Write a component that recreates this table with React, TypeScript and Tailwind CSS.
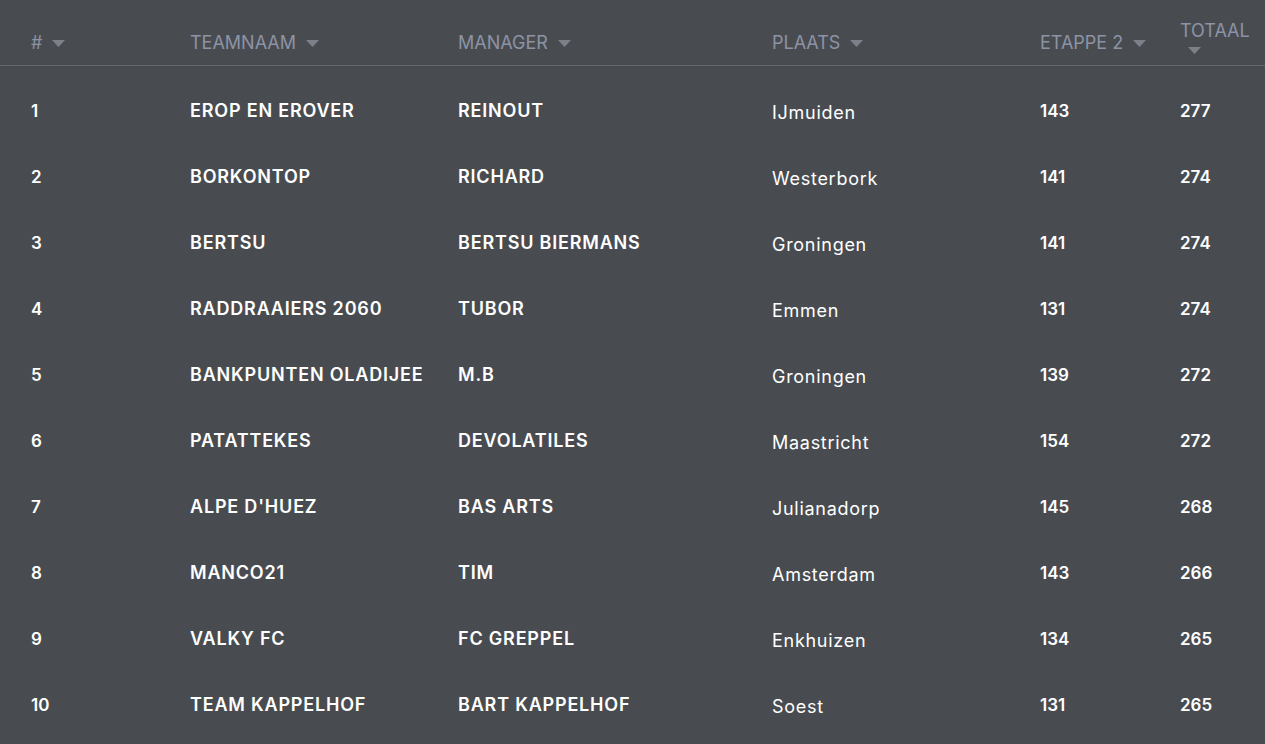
import React from 'react';

const rows = [
  { pos: 1, team: 'EROP EN EROVER', manager: 'REINOUT', plaats: 'IJmuiden', etappe: 143, totaal: 277 },
  { pos: 2, team: 'BORKONTOP', manager: 'RICHARD', plaats: 'Westerbork', etappe: 141, totaal: 274 },
  { pos: 3, team: 'BERTSU', manager: 'BERTSU BIERMANS', plaats: 'Groningen', etappe: 141, totaal: 274 },
  { pos: 4, team: 'RADDRAAIERS 2060', manager: 'TUBOR', plaats: 'Emmen', etappe: 131, totaal: 274 },
  { pos: 5, team: 'BANKPUNTEN OLADIJEE', manager: 'M.B', plaats: 'Groningen', etappe: 139, totaal: 272 },
  { pos: 6, team: 'PATATTEKES', manager: 'DEVOLATILES', plaats: 'Maastricht', etappe: 154, totaal: 272 },
  { pos: 7, team: "ALPE D'HUEZ", manager: 'BAS ARTS', plaats: 'Julianadorp', etappe: 145, totaal: 268 },
  { pos: 8, team: 'MANCO21', manager: 'TIM', plaats: 'Amsterdam', etappe: 143, totaal: 266 },
  { pos: 9, team: 'VALKY FC', manager: 'FC GREPPEL', plaats: 'Enkhuizen', etappe: 134, totaal: 265 },
  { pos: 10, team: 'TEAM KAPPELHOF', manager: 'BART KAPPELHOF', plaats: 'Soest', etappe: 131, totaal: 265 },
];

const Caret = () => (
  <svg width="13" height="7" viewBox="0 0 13 7" className="inline-block shrink-0">
    <path d="M0 0 L13 0 L6.5 7 Z" fill="#7c8088" />
  </svg>
);

const HeadCell = ({ label }: { label: string }) => (
  <div className="mt-[31px] flex h-[24px] items-center gap-[10px]">
    <span>{label}</span>
    <Caret />
  </div>
);

const cols = 'grid grid-cols-[159px_268px_314px_268px_140px_1fr] pl-[31px] pr-[18px]';

const App = () => {
  return (
    <div
      className="min-h-[744px] w-full bg-[#484c51] text-white"
      style={{ fontFamily: 'Inter, "Open Sans", sans-serif' }}
    >
      <div className={`${cols} h-[66px] items-start border-b border-[#64686e] text-[18px] leading-[24px] text-[#8d93a5]`}>
        <HeadCell label="#" />
        <HeadCell label="TEAMNAAM" />
        <HeadCell label="MANAGER" />
        <HeadCell label="PLAATS" />
        <HeadCell label="ETAPPE 2" />
        <div className="mt-[19px] flex flex-col items-start">
          <span>TOTAAL</span>
          <span className="flex pl-[8px] pt-[4px]">
            <Caret />
          </span>
        </div>
      </div>
      <div className="pt-[11px]">
        {rows.map((r) => (
          <div key={r.pos} className={`${cols} h-[66px] items-center leading-[26px]`}>
            <div className="pt-[2px] text-[17px] font-semibold">{r.pos}</div>
            <div className="pt-[2px] text-[18px] font-semibold tracking-[0.045em]">{r.team}</div>
            <div className="pt-[2px] text-[18px] font-semibold tracking-[0.045em]">{r.manager}</div>
            <div className="pt-[5px] text-[18px] tracking-[0.04em]">{r.plaats}</div>
            <div className="pt-[2px] text-[17px] font-semibold">{r.etappe}</div>
            <div className="pt-[2px] text-[17px] font-semibold">{r.totaal}</div>
          </div>
        ))}
      </div>
    </div>
  );
};

export default App;
